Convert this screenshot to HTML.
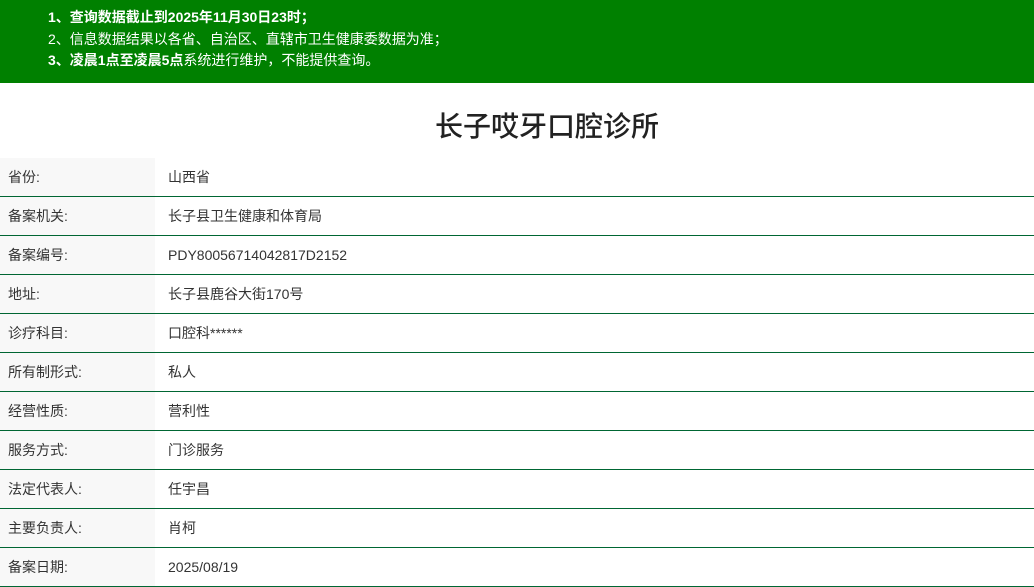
<!DOCTYPE html>
<html><head><meta charset="utf-8"><style>
*{margin:0;padding:0;box-sizing:border-box}
body{width:1034px;height:575px;overflow:hidden;background:#fff;font-family:"Liberation Sans","Noto Sans CJK SC",sans-serif;color:#333}
.top{background:#008000;height:83px;color:#fff;font-size:14px;padding:7px 0 0 48px}
.top div{height:21.5px;line-height:21.5px}
.b{font-weight:bold}
h1{text-align:center;font-size:28px;font-weight:500;color:#222;height:75px;line-height:88px;padding-left:60px}
.row{display:flex;height:39px;border-bottom:1px solid #006633;font-size:14px;line-height:38px}
.l{width:155px;background:#f8f8f8;padding-left:8px}
.v{padding-left:13px}
</style></head><body>
<div class="top">
<div class="b">1、查询数据截止到2025年11月30日23时；</div>
<div>2、信息数据结果以各省、自治区、直辖市卫生健康委数据为准；</div>
<div><span class="b">3、凌晨1点至凌晨5点</span>系统进行维护，不能提供查询。</div>
</div>
<h1>长子哎牙口腔诊所</h1>
<div class="row"><div class="l">省份:</div><div class="v">山西省</div></div>
<div class="row"><div class="l">备案机关:</div><div class="v">长子县卫生健康和体育局</div></div>
<div class="row"><div class="l">备案编号:</div><div class="v">PDY80056714042817D2152</div></div>
<div class="row"><div class="l">地址:</div><div class="v">长子县鹿谷大街170号</div></div>
<div class="row"><div class="l">诊疗科目:</div><div class="v">口腔科******</div></div>
<div class="row"><div class="l">所有制形式:</div><div class="v">私人</div></div>
<div class="row"><div class="l">经营性质:</div><div class="v">营利性</div></div>
<div class="row"><div class="l">服务方式:</div><div class="v">门诊服务</div></div>
<div class="row"><div class="l">法定代表人:</div><div class="v">任宇昌</div></div>
<div class="row"><div class="l">主要负责人:</div><div class="v">肖柯</div></div>
<div class="row"><div class="l">备案日期:</div><div class="v">2025/08/19</div></div>
</body></html>
